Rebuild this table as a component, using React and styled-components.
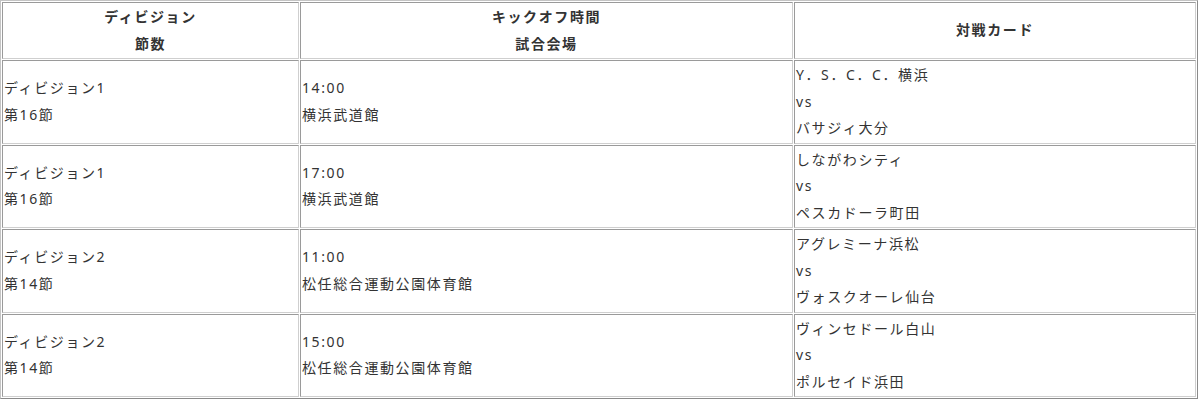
import React from "react";
import styled, { createGlobalStyle } from "styled-components";

const Global = createGlobalStyle`
  html, body { margin: 0; padding: 0; background: #fff; }
  body { font-family: "Noto Sans", "Noto Sans CJK JP", sans-serif; color: #333; }
`;

const Table = styled.table`
  width: 1198px;
  table-layout: fixed;
  border-collapse: separate;
  border-spacing: 1px;
  border-width: 1px;
  border-style: solid;
  border-color: #c4c4c4 #8a8a8a #8a8a8a #c4c4c4;
  font-size: 14px;
  line-height: 26.5px;
  letter-spacing: 1.6px;
`;

const Col = styled.col`
  width: ${(p) => p.$w}px;
`;

const HeadCell = styled.th`
  padding: 1px;
  border-width: 1px;
  border-style: solid;
  border-color: #9a9a9a #cfcfcf #cfcfcf #9a9a9a;
  font-weight: bold;
  text-align: center;
  vertical-align: middle;
  color: #333;
`;

const Cell = styled.td`
  padding: 1px;
  border-width: 1px;
  border-style: solid;
  border-color: #9a9a9a #cfcfcf #cfcfcf #9a9a9a;
  text-align: left;
  vertical-align: middle;
  color: #333;
  white-space: nowrap;
`;

const Line = styled.div``;

const rows = [
  ["ディビジョン1", "第16節", "14:00", "横浜武道館", "Y．S．C．C．横浜", "バサジィ大分"],
  ["ディビジョン1", "第16節", "17:00", "横浜武道館", "しながわシティ", "ペスカドーラ町田"],
  ["ディビジョン2", "第14節", "11:00", "松任総合運動公園体育館", "アグレミーナ浜松", "ヴォスクオーレ仙台"],
  ["ディビジョン2", "第14節", "15:00", "松任総合運動公園体育館", "ヴィンセドール白山", "ポルセイド浜田"],
];

export default function App() {
  return (
    <>
      <Global />
      <Table>
        <colgroup>
          <Col $w={297} />
          <Col $w={493} />
          <Col $w={402} />
        </colgroup>
        <thead>
          <tr>
            <HeadCell>
              <Line>ディビジョン</Line>
              <Line>節数</Line>
            </HeadCell>
            <HeadCell>
              <Line>キックオフ時間</Line>
              <Line>試合会場</Line>
            </HeadCell>
            <HeadCell>対戦カード</HeadCell>
          </tr>
        </thead>
        <tbody>
          {rows.map((r, i) => (
            <tr key={i}>
              <Cell>
                <Line>{r[0]}</Line>
                <Line>{r[1]}</Line>
              </Cell>
              <Cell>
                <Line>{r[2]}</Line>
                <Line>{r[3]}</Line>
              </Cell>
              <Cell>
                <Line>{r[4]}</Line>
                <Line>vs</Line>
                <Line>{r[5]}</Line>
              </Cell>
            </tr>
          ))}
        </tbody>
      </Table>
    </>
  );
}
